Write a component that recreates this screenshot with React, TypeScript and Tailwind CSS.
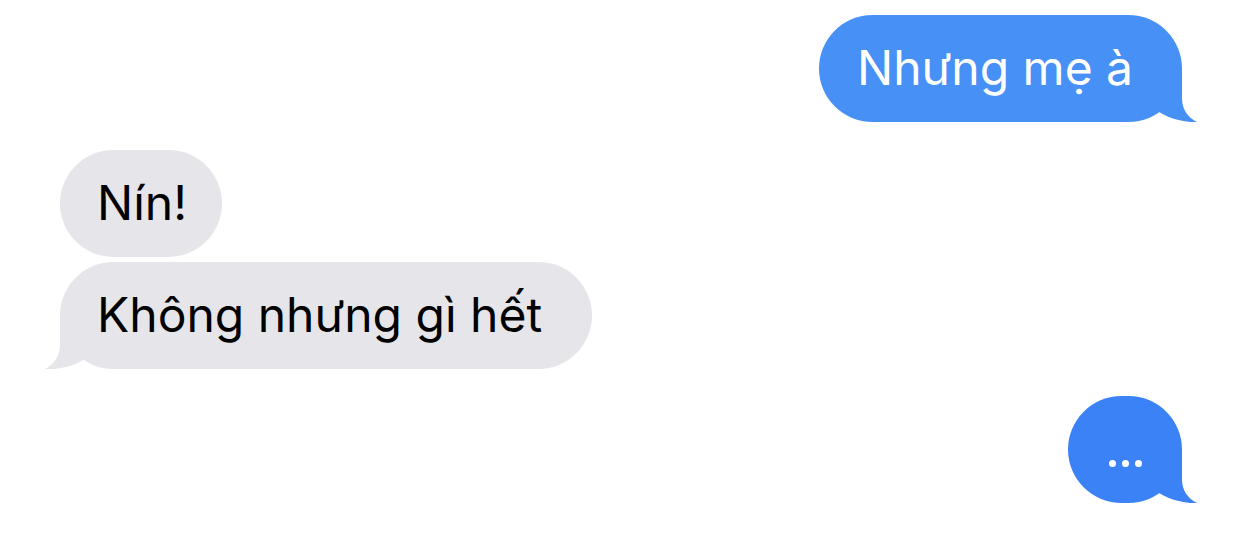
import React from "react";

const font = { fontFamily: 'Inter, "Noto Sans", sans-serif' };

function RightTail({ color }: { color: string }) {
  return (
    <svg
      className="absolute right-[-15px] bottom-[-1px]"
      width="50"
      height="55"
      viewBox="0 0 50 55"
    >
      <path
        d="M12 44 L12 0 L35 0 L35 30 C35 41 40 49 50 54 C40 54.5 25 52 12 44 Z"
        fill={color}
      />
    </svg>
  );
}

function LeftTail({ color }: { color: string }) {
  return (
    <svg
      className="absolute left-[-15px] bottom-[0px]"
      width="50"
      height="55"
      viewBox="0 0 50 55"
    >
      <path
        d="M38 46 L38 0 L15 0 L15 30 C15 41 10 50 0 55 C10 55.5 25 54 38 46 Z"
        fill={color}
      />
    </svg>
  );
}

export default function App() {
  return (
    <div className="w-[1242px] h-[556px] bg-white overflow-hidden" style={font}>
      <div className="flex flex-col px-[60px] pt-[15px]">
        <div className="flex justify-end">
          <div className="relative h-[107px] w-[363px] rounded-[54px] bg-[#4790f6] flex items-center pl-[38px]">
            <span className="text-white text-[48px] leading-none relative z-10 pb-[2px]">
              Nhưng mẹ à
            </span>
            <RightTail color="#4790f6" />
          </div>
        </div>

        <div className="flex justify-start mt-[28px]">
          <div className="h-[107px] w-[162px] rounded-[54px] bg-[#e5e5ea] flex items-center pl-[37px]">
            <span className="text-black text-[48px] leading-none pb-[2px]">Nín!</span>
          </div>
        </div>

        <div className="flex justify-start mt-[5px]">
          <div className="relative h-[107px] w-[532px] rounded-[54px] bg-[#e5e5ea] flex items-center pl-[37px]">
            <span className="text-black text-[48px] leading-none relative z-10 pb-[2px]">
              Không nhưng gì hết
            </span>
            <LeftTail color="#e5e5ea" />
          </div>
        </div>

        <div className="flex justify-end mt-[27px]">
          <div className="relative h-[107px] w-[114px] rounded-[54px] bg-[#3b82f6] flex items-end justify-center pb-[36px]">
            <div className="flex gap-[6px] relative z-10">
              <span className="block w-[7px] h-[7px] rounded-full bg-white" />
              <span className="block w-[7px] h-[7px] rounded-full bg-white" />
              <span className="block w-[7px] h-[7px] rounded-full bg-white" />
            </div>
            <RightTail color="#3b82f6" />
          </div>
        </div>
      </div>
    </div>
  );
}
